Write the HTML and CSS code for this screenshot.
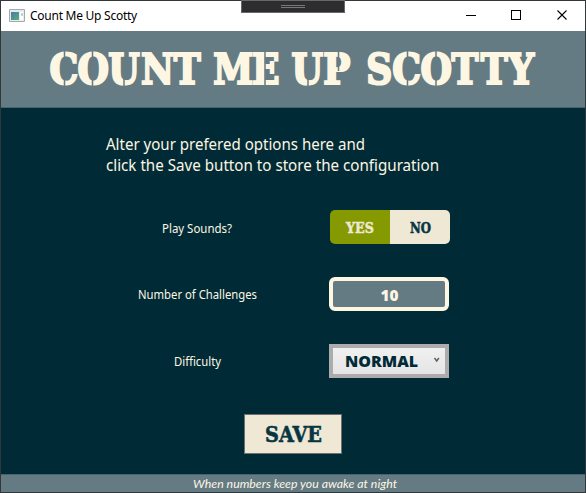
FILE: index.html
```html
<!DOCTYPE html>
<html lang="en">
<head>
<meta charset="utf-8">
<title>Count Me Up Scotty</title>
<link rel="stylesheet" href="styles.css">
</head>
<body>
<div class="window">
  <div class="titlebar">
    <svg class="app-icon" width="16" height="14" viewBox="0 0 16 14"><defs><linearGradient id="g" x2="1" y2="1"><stop stop-color="#4c79a8"/><stop offset="1" stop-color="#55b07c"/></linearGradient></defs><path d="M.5.5h15v12H.5z" fill="#e8ebed" stroke="#a3a9ac"/><path d="M2 3h8v8H2z" fill="url(#g)"/><path d="M11 3h3v8h-3z" fill="#fff"/><path d="M12 4h2v3h-2z" fill="#b7d6cd"/></svg>
    <span class="window-title">Count Me Up Scotty</span>
    <svg class="controls" width="138" height="30" viewBox="447 1 138 30" fill="none" stroke="#000" shape-rendering="crispEdges"><path d="M466 15.500h10M511.500 10.500h9v9h-9z"/><path d="M557.500 10.500l9 9M566.500 10.500l-9 9" shape-rendering="auto" stroke-width="1.1"/></svg>
    <div class="grip"><i></i></div>
  </div>
  <header class="banner">
    <svg width="584" height="76" viewBox="1 31 584 76">
      <text class="heading" transform="scale(.86 1)" y="84.500" x="57.500 90 126 164 202 233 248 293 325 339 376 412 426 456 489 525 559 591">COUNT ME UP SCOTTY</text>
      <path class="cuts" d="M64.500 51v8M64.500 79v8M92.500 51v8M92.500 79v8M124 79v8M407.500 51v8M407.500 79v8M436 51v8M436 79v8M308 79v8M265 51v35M338.500 51v20"/>
    </svg>
  </header>
  <main class="content">
    <p class="intro"><svg width="340" height="44"><text x="0" y="16" textLength="259" lengthAdjust="spacingAndGlyphs">Alter your prefered options here and</text><text x="0" y="37" textLength="333" lengthAdjust="spacingAndGlyphs">click the Save button to store the configuration</text></svg></p>
    <div class="row">
      <span class="label"><svg width="70" height="18"><text y="14.500" textLength="70" lengthAdjust="spacingAndGlyphs">Play Sounds?</text></svg></span>
      <div class="toggle">
        <svg class="yes" width="60" height="34"><text x="16" y="23" textLength="28" lengthAdjust="spacingAndGlyphs">YES</text></svg>
        <svg class="no" width="60" height="34"><text x="20" y="23" textLength="21" lengthAdjust="spacingAndGlyphs">NO</text></svg>
      </div>
    </div>
    <div class="row">
      <span class="label"><svg width="119" height="18"><text y="14" textLength="119" lengthAdjust="spacingAndGlyphs">Number of Challenges</text></svg></span>
      <div class="number"><svg width="112" height="26"><text x="47.500" y="20" textLength="18" lengthAdjust="spacingAndGlyphs">10</text></svg></div>
    </div>
    <div class="row">
      <span class="label"><svg width="47" height="18"><text y="14" textLength="47" lengthAdjust="spacingAndGlyphs">Difficulty</text></svg></span>
      <div class="select"><svg width="112" height="26"><text x="12" y="19" textLength="73" lengthAdjust="spacingAndGlyphs">NORMAL</text><path d="M101.500 10l2.200 3 2.200-3" fill="none" stroke="#606060" stroke-width="1.500"/></svg></div>
    </div>
    <button class="save"><svg width="96" height="38"><text x="20" y="27" textLength="57" lengthAdjust="spacingAndGlyphs">SAVE</text></svg></button>
  </main>
  <footer class="footer"><svg width="584" height="17"><text x="192" y="12.500" textLength="204" lengthAdjust="spacingAndGlyphs">When numbers keep you awake at night</text></svg></footer>
</div>
</body>
</html>
```
FILE: styles.css
```css
* { box-sizing: border-box; }
body { margin: 0; width: 586px; height: 493px; overflow: hidden; background: #30383b; font-family: "Open Sans", sans-serif; }
svg { display: block; overflow: visible; }
.window { width: 584px; margin: 0 1px; padding-top: 1px; height: 492px; display: flex; flex-direction: column; position: relative; }
.titlebar { height: 30px; flex: none; background: #fff; display: flex; align-items: center; padding-left: 8px; font: 12px "Noto Sans", sans-serif; color: #000; }
.window-title { margin: -1px 0 0 5px; letter-spacing: -.26px; white-space: nowrap; }
.controls { margin-left: auto; }
.grip { position: absolute; left: 240px; top: 0; width: 104px; height: 13px; background: #2d2d30; border: 1px solid #686868; display: flex; justify-content: center; padding-top: 4px; }
.grip i { width: 24px; height: 3px; border: solid #777; border-width: 1px 0; }
.banner { height: 77px; flex: none; background: #657b83; border-bottom: 1px solid #47646e; }
.heading { font: bold 42px "DejaVu Serif", serif; fill: #fdf6e3; stroke: #fdf6e3; stroke-width: 2.2; white-space: pre; }
.cuts { fill: none; stroke: #657b83; stroke-width: 1.5; }
.content { flex: 1; background: #002b36; padding: 26px 136px 0 105px; display: flex; flex-direction: column; }
.intro { margin: 0 0 32px; height: 44px; font: 16px "Noto Sans", sans-serif; fill: #fdf6e3; }
.row { display: flex; justify-content: space-between; align-items: center; height: 34px; margin-bottom: 33px; }
.label { width: 182px; display: flex; justify-content: center; font: 12px "Noto Sans", sans-serif; fill: #fdf6e3; }
.toggle { width: 120px; height: 34px; display: flex; border-radius: 5px; overflow: hidden; position: relative; left: 1px; font: bold 15px "DejaVu Serif", serif; }
.yes { background: #859900; fill: #eee8d5; stroke: #eee8d5; stroke-width: .5; }
.no { background: #eee8d5; fill: #073642; stroke: #073642; stroke-width: .5; }
.number { width: 120px; height: 34px; border: 4px solid #fdf6e3; border-radius: 6px; background: #657b83; font: 800 15px "Open Sans", sans-serif; fill: #fdf6e3; }
.select { width: 120px; height: 34px; border: 4px solid #acacac; background: linear-gradient(#f0f0f0, #e5e5e5); font: 800 16px "Open Sans", sans-serif; fill: #002b36; }
.save { margin: 3px 0 0 138px; padding: 0; width: 98px; height: 40px; border: 1px solid #707070; background: #eee8d5; font: bold 22px "DejaVu Serif", serif; fill: #073642; stroke: #073642; stroke-width: .6; }
.footer { height: 18px; flex: none; background: #657b83; border-top: 1px solid #47646e; font: italic 12px Lato, sans-serif; fill: #fdf6e3; }
```
